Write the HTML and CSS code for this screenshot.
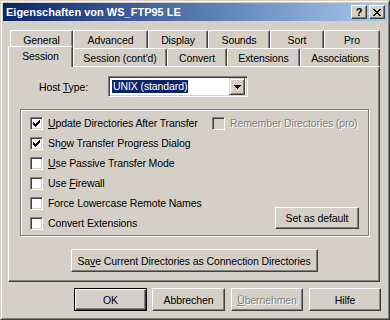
FILE: index.html
```html
<!DOCTYPE html>
<html lang="de">
<head>
  <meta charset="UTF-8">
  <title>Eigenschaften von WS_FTP95 LE</title>
  <link rel="stylesheet" href="styles.css">
</head>
<body>
  <div class="window">
    <div class="window-inner">
      <div class="titlebar">
        <span class="title">Eigenschaften von WS_FTP95 LE</span>
        <div class="caption-btns">
          <span class="cap-btn help">?</span>
          <span class="cap-btn">
            <svg width="8" height="7" viewBox="0 0 8 7" shape-rendering="crispEdges"><path d="M0 0h2v1H0z M6 0h2v1H6z M1 1h2v1H1z M5 1h2v1H5z M2 2h4v1H2z M3 3h2v1H3z M2 4h4v1H2z M1 5h2v1H1z M5 5h2v1H5z M0 6h2v1H0z M6 6h2v1H6z"/></svg>
          </span>
        </div>
      </div>

      <div class="content">
        <div class="tabs">
          <div class="tab-row back">
            <div class="tab">General</div>
            <div class="tab">Advanced</div>
            <div class="tab">Display</div>
            <div class="tab">Sounds</div>
            <div class="tab">Sort</div>
            <div class="tab">Pro</div>
          </div>
          <div class="tab-row front">
            <div class="tab active">Session</div>
            <div class="tab">Session (cont'd)</div>
            <div class="tab">Convert</div>
            <div class="tab">Extensions</div>
            <div class="tab">Associations</div>
          </div>
        </div>

        <div class="panel">
          <div class="host-row">
            <span class="host-label">Host <u>T</u>ype:</span>
            <div class="combo">
              <span class="combo-value">UNIX (standard)</span>
              <span class="combo-btn">
                <svg width="7" height="4" viewBox="0 0 7 4" shape-rendering="crispEdges"><path d="M0 0h7v1H0z M1 1h5v1H1z M2 2h3v1H2z M3 3h1v1H3z"/></svg>
              </span>
            </div>
          </div>

          <div class="group">
            <div class="checks">
              <div class="check-row"><span class="checkbox checked"></span><span><u>U</u>pdate Directories After Transfer</span></div>
              <div class="check-row"><span class="checkbox checked"></span><span>Sh<u>o</u>w Transfer Progress Dialog</span></div>
              <div class="check-row"><span class="checkbox"></span><span><u>U</u>se Passive Transfer Mode</span></div>
              <div class="check-row"><span class="checkbox"></span><span>Use <u>F</u>irewall</span></div>
              <div class="check-row"><span class="checkbox"></span><span>Force Lowercase Remote Names</span></div>
              <div class="check-row"><span class="checkbox"></span><span>Convert Extensions</span></div>
            </div>
            <div class="side">
              <div class="check-row disabled"><span class="checkbox"></span><span>Remember Directories (pro)</span></div>
              <button class="btn btn-default-set">Set as default</button>
            </div>
          </div>

          <button class="btn btn-save">Sa<u>v</u>e Current Directories as Connection Directories</button>
        </div>

        <div class="footer">
          <button class="btn btn-ok">OK</button>
          <button class="btn btn-cancel">Abbrechen</button>
          <button class="btn btn-apply disabled"><u>Ü</u>bernehmen</button>
          <button class="btn btn-help">Hilfe</button>
        </div>
      </div>
    </div>
  </div>
</body>
</html>
```

FILE: styles.css
```css
body {
  margin: 0;
  font-family: "Liberation Sans", Arial, sans-serif;
  font-size: 10.5px;
  letter-spacing: -0.1px;
  white-space: nowrap;
  background-color: #d4d0c8;
  color: #000;
}

.window {
  width: 390px;
  height: 320px;
  box-sizing: border-box;
  border: 1px solid;
  border-color: #d4d0c8 #404040 #404040 #d4d0c8;
}

.window-inner {
  height: 100%;
  box-sizing: border-box;
  border: 1px solid;
  border-color: #fff #808080 #808080 #fff;
  padding: 1px;
  display: flex;
  flex-direction: column;
}

.titlebar {
  height: 18px;
  flex: none;
  background: linear-gradient(to right, #0a246a, #a6caf0);
  display: flex;
  align-items: center;
  justify-content: space-between;
  padding: 0 2px 0 3px;
}

.title {
  color: white;
  font-weight: bold;
  font-size: 11px;
  letter-spacing: 0;
}

.caption-btns {
  display: flex;
  gap: 2px;
}

.cap-btn {
  width: 16px;
  height: 14px;
  box-sizing: border-box;
  background-color: #d4d0c8;
  border: 1px solid;
  border-color: #fff #404040 #404040 #fff;
  box-shadow: inset -1px -1px #808080;
  display: flex;
  align-items: center;
  justify-content: center;
}

.cap-btn.help {
  font-weight: bold;
  font-size: 11px;
  line-height: 12px;
}

.content {
  padding: 9px 7px 0 5px;
  display: flex;
  flex-direction: column;
}

/* tabs */
.tab-row {
  display: flex;
  align-items: flex-start;
  height: 18px;
  margin: 0 1px 0 2px;
}

.tab {
  box-sizing: border-box;
  height: 18px;
  flex: none;
  border: 1px solid;
  border-color: #fff #404040 transparent #fff;
  border-bottom: none;
  border-radius: 2px 2px 0 0;
  box-shadow: inset -1px 0 #808080;
  background-color: #d4d0c8;
  display: flex;
  align-items: center;
  justify-content: center;
}

.back .tab:nth-child(1) { width: 63px; }
.back .tab:nth-child(2) { width: 75px; }
.back .tab:nth-child(3) { width: 60px; }
.back .tab:nth-child(4) { width: 62px; }
.back .tab:nth-child(5) { width: 54px; }
.back .tab:nth-child(6) { width: 56px; }

.front .tab:nth-child(1) { width: 65px; }
.front .tab:nth-child(2) { width: 94px; }
.front .tab:nth-child(3) { width: 60px; }
.front .tab:nth-child(4) { width: 73px; }
.front .tab:nth-child(5) { width: 80px; }

.tab.active {
  height: 21px;
  margin: -2px 0 -1px -2px;
  padding-bottom: 3px;
  position: relative;
  z-index: 1;
}

/* panel */
.panel {
  height: 216px;
  box-sizing: border-box;
  border: 1px solid;
  border-color: #fff #404040 #404040 #fff;
  box-shadow: inset -1px -1px #808080;
  padding-top: 9px;
  display: flex;
  flex-direction: column;
}

.host-row {
  display: flex;
  align-items: center;
  padding-left: 30px;
}

.host-label {
  width: 69px;
}

.combo {
  width: 140px;
  height: 21px;
  box-sizing: border-box;
  border: 1px solid;
  border-color: #808080 #fff #fff #808080;
  box-shadow: inset 1px 1px #404040, inset -1px -1px #d4d0c8;
  background-color: white;
  padding: 2px;
  display: flex;
  align-items: center;
  justify-content: space-between;
}

.combo-value {
  background-color: #0a246a;
  color: white;
  height: 13px;
  line-height: 13px;
  padding: 0 1px;
  margin-left: 1px;
}

.combo-btn {
  width: 16px;
  height: 17px;
  box-sizing: border-box;
  background-color: #d4d0c8;
  border: 1px solid;
  border-color: #d4d0c8 #404040 #404040 #d4d0c8;
  box-shadow: inset 1px 1px #fff, inset -1px -1px #808080;
  display: flex;
  align-items: center;
  justify-content: center;
}

.group {
  width: 349px;
  box-sizing: border-box;
  margin: 12px 0 0 11px;
  border: 1px solid #808080;
  box-shadow: inset 1px 1px #fff, 1px 1px #fff;
  padding: 3px 9px 2px 9px;
  display: grid;
  grid-template-columns: 182px 1fr;
}

.check-row {
  height: 20px;
  display: flex;
  align-items: center;
  gap: 5px;
}

.checkbox {
  width: 13px;
  height: 13px;
  box-sizing: border-box;
  border: 1px solid;
  border-color: #808080 #fff #fff #808080;
  box-shadow: inset 1px 1px #404040, inset -1px -1px #d4d0c8;
  background-color: white;
  flex: none;
}

.checkbox.checked {
  background-image: url("data:image/svg+xml,%3Csvg xmlns='http://www.w3.org/2000/svg' width='7' height='7' shape-rendering='crispEdges'%3E%3Cpath d='M0 2h1v3H0z M1 3h1v3H1z M2 4h1v3H2z M3 3h1v3H3z M4 2h1v3H4z M5 1h1v3H5z M6 0h1v3H6z'/%3E%3C/svg%3E");
  background-repeat: no-repeat;
  background-position: 2px 2px;
}

.check-row.disabled {
  color: #808080;
  text-shadow: 1px 1px 0 #fff;
}

.check-row.disabled .checkbox {
  background-color: #d4d0c8;
}

.side {
  display: flex;
  flex-direction: column;
  justify-content: space-between;
  align-items: flex-end;
  padding-bottom: 4px;
}

.side .check-row {
  align-self: flex-start;
}

.btn {
  box-sizing: border-box;
  height: 23px;
  padding: 0;
  font: inherit;
  letter-spacing: inherit;
  color: #000;
  background-color: #d4d0c8;
  border: 1px solid;
  border-color: #fff #404040 #404040 #fff;
  box-shadow: inset -1px -1px #808080;
}

.btn.disabled {
  color: #808080;
  text-shadow: 1px 1px 0 #fff;
}

.btn-default-set {
  width: 84px;
  height: 22px;
}

.btn-save {
  width: 247px;
  margin-top: 13px;
  align-self: center;
}

.footer {
  display: flex;
  margin: 6px -1px 0 0;
  justify-content: flex-end;
}

.btn-ok {
  width: 73px;
  border-color: #000;
  box-shadow: inset 1px 1px #fff, inset -1px -1px #404040, inset -2px -2px #808080;
}

.btn-cancel {
  width: 73px;
  margin-left: 5px;
}

.btn-apply {
  width: 72px;
  margin-left: 6px;
}

.btn-help {
  width: 72px;
  margin-left: 6px;
}
```
